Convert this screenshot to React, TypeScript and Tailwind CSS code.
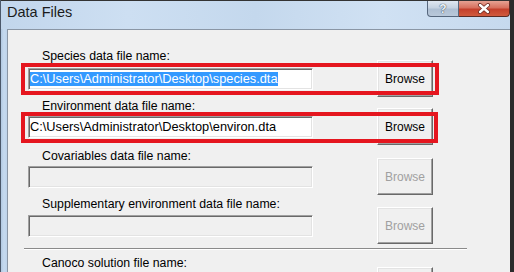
import React from "react";

const font = "font-['Liberation_Sans',Arial,sans-serif]";

function Field({ enabled, value, selected }: { enabled: boolean; value?: string; selected?: boolean }) {
  return (
    <div
      className={`h-[22px] w-[285px] shrink-0 border border-t-[#a0a0a0] border-l-[#a0a0a0] border-b-white border-r-white shadow-[inset_1px_1px_0_#696969,inset_-1px_-1px_0_#e3e3e3] flex items-center pl-[1px] overflow-hidden ${
        enabled ? "bg-white" : "bg-[#f0f0f0]"
      }`}
    >
      {value && (
        <span
          className={`text-[12.8px] leading-[14px] whitespace-nowrap ${
            selected ? "bg-[#3399ff] text-white" : "text-black"
          }`}
        >
          {value}
        </span>
      )}
    </div>
  );
}

function Button({ enabled, label = true }: { enabled: boolean; label?: boolean }) {
  return (
    <div
      className={`h-[37px] w-[56px] shrink-0 bg-[#f0f0f0] border border-t-white border-l-white border-r-[#696969] border-b-[#696969] shadow-[inset_-1px_-1px_0_#a0a0a0,inset_1px_1px_0_#e3e3e3] flex items-center justify-center text-[12px] ${
        enabled ? "text-black" : "text-[#a0a0a0]"
      }`}
    >
      {label ? "Browse" : null}
    </div>
  );
}

function Row({
  enabled,
  value,
  selected,
  mt,
  label = true,
}: {
  enabled: boolean;
  value?: string;
  selected?: boolean;
  mt: string;
  label?: boolean;
}) {
  return (
    <div className={`flex items-center ml-[20px] gap-[64px] ${mt}`}>
      <Field enabled={enabled} value={value} selected={selected} />
      <Button enabled={enabled} label={label} />
    </div>
  );
}

function Label({ text, mt }: { text: string; mt: string }) {
  return <div className={`ml-[34px] h-[14px] text-[12.3px] leading-[14px] text-black whitespace-nowrap ${mt}`}>{text}</div>;
}

export default function App() {
  return (
    <div className={`w-[514px] h-[272px] overflow-hidden bg-[#2b2b2b] ${font}`}>
      <div className="w-[510px] h-full flex flex-col border-l border-[#4b586a] bg-[#c3d7ed]">
        {/* Title bar */}
        <div className="h-[29px] shrink-0 border-t border-[#333] flex items-start justify-between bg-[linear-gradient(90deg,#c2d6ec_0%,#cddff2_25%,#c4d8ed_50%,#d0e1f3_75%,#c6d9ee_100%)]">
          <div className="pl-[6px] pt-[3px] text-[14.5px] leading-[17px] text-[#1b1b1b]">Data Files</div>
          <div className="flex h-[16px]">
            <div className="w-[32px] h-[16px] border border-t-0 border-[#56677d] rounded-bl-[4px] bg-[linear-gradient(180deg,#dfe7f1_0%,#c5d2e1_45%,#aebfd3_55%,#b9c8da_100%)] flex items-center justify-center">
              <span className="text-[12px] leading-[12px] font-bold text-[#eef3f8] [text-shadow:0_0_1px_#3c4b5e,0_0_1px_#3c4b5e]">?</span>
            </div>
            <div className="w-[51px] h-[16px] border border-t-0 border-l-0 border-[#5a2a24] rounded-br-[4px] bg-[linear-gradient(180deg,#e6a293_0%,#d7705e_45%,#c4402c_55%,#d05a3e_100%)] flex items-center justify-center">
              <svg width="14" height="11" viewBox="0 0 14 11">
                <path d="M3 2 L11 9 M11 2 L3 9" stroke="#6b2a22" strokeWidth="4" strokeLinecap="round" />
                <path d="M3 2 L11 9 M11 2 L3 9" stroke="#ffffff" strokeWidth="2.4" strokeLinecap="round" />
              </svg>
            </div>
          </div>
        </div>
        {/* Body */}
        <div className="flex flex-1 min-h-0">
          <div className="w-[6px] shrink-0 bg-[linear-gradient(90deg,#b2c9e2_0%,#c6daef_50%,#bed3ea_100%)]" />
          <div className="flex-1 relative border-t border-l border-[#8a96a5] bg-[#f0f0f0] flex flex-col overflow-hidden">
            <Label text="Species data file name:" mt="mt-[19px]" />
            <Row enabled value="C:\Users\Administrator\Desktop\species.dta" selected mt="mt-[-3px]" />
            <Label text="Environment data file name:" mt="mt-[2px]" />
            <Row enabled value="C:\Users\Administrator\Desktop\environ.dta" mt="mt-[-5px]" />
            <Label text="Covariables data file name:" mt="mt-[4px]" />
            <Row enabled={false} mt="mt-[-5px]" />
            <Label text="Supplementary environment data file name:" mt="mt-[2px]" />
            <Row enabled={false} mt="mt-[-4px]" />
            <div className="ml-[16px] mt-[4px] w-[443px] h-[2px] shrink-0 border-t border-[#8a8a8a] border-b border-b-white" />
            <Label text="Canoco solution file name:" mt="mt-[6px]" />
            <Row enabled={false} label={false} mt="mt-[-3px]" />

            {/* Red annotation boxes */}
            <div className="absolute left-[13px] top-[33px] w-[418px] h-[32px] border-[4px] border-[#e5161f]" />
            <div className="absolute left-[13px] top-[82px] w-[417px] h-[31px] border-[4px] border-[#e5161f]" />
          </div>
        </div>
      </div>
    </div>
  );
}
